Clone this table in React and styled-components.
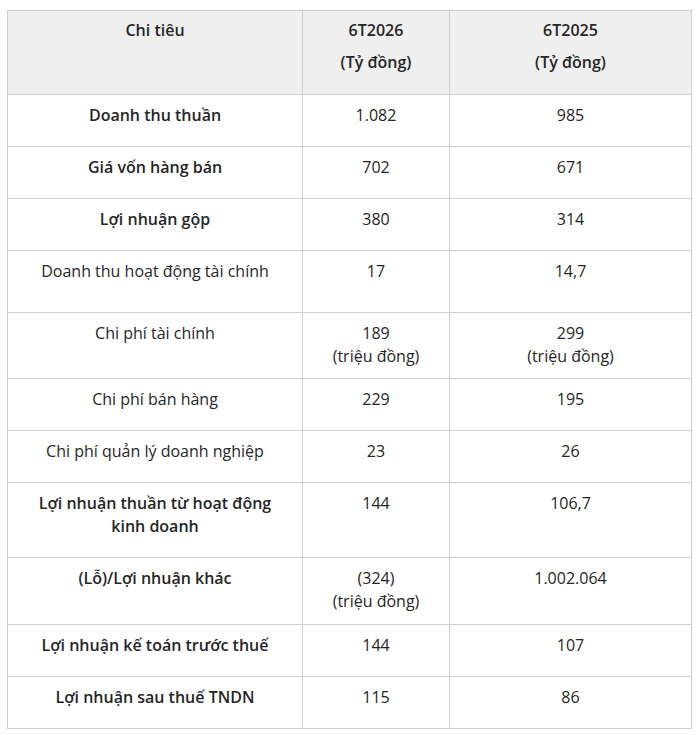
import React from "react";
import styled, { createGlobalStyle } from "styled-components";

const Global = createGlobalStyle`
  html, body { margin: 0; padding: 0; background: #fff; }
  body { padding: 10px 9px 0 7px; font-family: "Open Sans", Roboto, sans-serif; color: #262626; }
`;

const Table = styled.table`
  width: 684px;
  border-collapse: collapse;
  table-layout: fixed;
  border: 1px solid #cfcfcf;
  font-size: 16px;
  line-height: 23px;
`;

const Col = styled.col`
  width: ${(p) => p.$w}px;
`;

const HeadRow = styled.tr`
  background: #efefef;
  height: 84px;
`;

const Row = styled.tr`
  height: ${(p) => p.$h}px;
`;

const Th = styled.th`
  border: 1px solid #cfcfcf;
  vertical-align: top;
  text-align: center;
  font-weight: 600;
  padding: 8px 4px 0;
`;

const Td = styled.td`
  border: 1px solid #cfcfcf;
  vertical-align: top;
  text-align: center;
  font-weight: ${(p) => (p.$bold ? 600 : 400)};
  padding: 9px 4px 0;
`;

const HeadLine = styled.div`
  & + & { margin-top: 9px; }
`;

const Line = styled.div``;

const rows = [
  { label: "Doanh thu thuần", bold: true, a: ["1.082"], b: ["985"], h: 52 },
  { label: "Giá vốn hàng bán", bold: true, a: ["702"], b: ["671"], h: 52 },
  { label: "Lợi nhuận gộp", bold: true, a: ["380"], b: ["314"], h: 52 },
  { label: "Doanh thu hoạt động tài chính", a: ["17"], b: ["14,7"], h: 62 },
  { label: "Chi phí tài chính", a: ["189", "(triệu đồng)"], b: ["299", "(triệu đồng)"], h: 66 },
  { label: "Chi phí bán hàng", a: ["229"], b: ["195"], h: 52 },
  { label: "Chi phí quản lý doanh nghiệp", a: ["23"], b: ["26"], h: 52 },
  { label: ["Lợi nhuận thuần từ hoạt động", "kinh doanh"], bold: true, a: ["144"], b: ["106,7"], h: 75 },
  { label: "(Lỗ)/Lợi nhuận khác", bold: true, a: ["(324)", "(triệu đồng)"], b: ["1.002.064"], h: 67 },
  { label: "Lợi nhuận kế toán trước thuế", bold: true, a: ["144"], b: ["107"], h: 52 },
  { label: "Lợi nhuận sau thuế TNDN", bold: true, a: ["115"], b: ["86"], h: 52 },
];

const Lines = ({ items }) =>
  (Array.isArray(items) ? items : [items]).map((t, i) => <Line key={i}>{t}</Line>);

export default function App() {
  return (
    <>
      <Global />
      <Table>
        <colgroup>
          <Col $w={295} />
          <Col $w={147} />
          <Col $w={242} />
        </colgroup>
        <thead>
          <HeadRow>
            <Th><HeadLine>Chi tiêu</HeadLine></Th>
            <Th><HeadLine>6T2026</HeadLine><HeadLine>(Tỷ đồng)</HeadLine></Th>
            <Th><HeadLine>6T2025</HeadLine><HeadLine>(Tỷ đồng)</HeadLine></Th>
          </HeadRow>
        </thead>
        <tbody>
          {rows.map((r, i) => (
            <Row key={i} $h={r.h}>
              <Td $bold={r.bold}><Lines items={r.label} /></Td>
              <Td><Lines items={r.a} /></Td>
              <Td><Lines items={r.b} /></Td>
            </Row>
          ))}
        </tbody>
      </Table>
    </>
  );
}
